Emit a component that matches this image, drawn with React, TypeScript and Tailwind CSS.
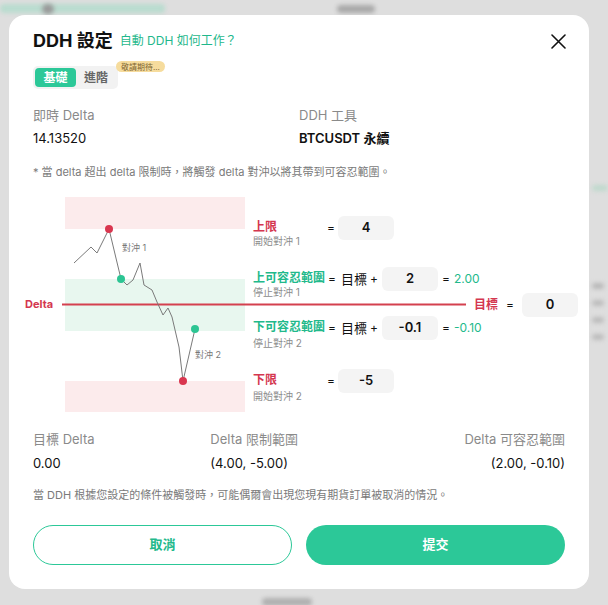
import React from "react";

// price path drawn inside the hedge diagram (x, y relative to the chart box)
const path: [number, number][] = [
  [65, 66], [82, 50], [88, 56], [100, 32], [112, 82], [118, 88], [124, 83],
  [131, 66], [135, 88], [143, 93], [148, 105], [154, 118], [159, 111],
  [163, 120], [170, 150], [174, 184], [186, 132],
];

function ValueBox({ value, className = "" }: { value: string; className?: string }) {
  return (
    <div
      className={`flex h-6 w-14 items-center justify-center rounded-md bg-[#f4f4f4] text-[13px] font-semibold text-[#111] ${className}`}
    >
      {value}
    </div>
  );
}

function HedgeChart() {
  return (
    <svg className="absolute inset-0" width={580} height={215} viewBox="0 0 580 215">
      <rect x={56} y={0} width={180} height={32} fill="#fcebec" />
      <rect x={56} y={82} width={180} height={52} fill="#e8f7ef" />
      <rect x={56} y={184} width={180} height={31} fill="#fcebec" />
      <line x1={53} y1={107.5} x2={457} y2={107.5} stroke="#d4404f" strokeWidth={2} />
      <text x={16} y={111} fontSize={11} fontWeight={700} fill="#d4374f">
        Delta
      </text>
      <polyline
        points={path.map((p) => p.join(",")).join(" ")}
        fill="none"
        stroke="#7a7a7a"
        strokeWidth={1}
      />
      <circle cx={100} cy={32} r={4} fill="#d9364f" />
      <circle cx={112} cy={82} r={4} fill="#2cc593" />
      <circle cx={174} cy={184} r={4} fill="#d9364f" />
      <circle cx={186} cy={132} r={4} fill="#2cc593" />
      <text x={113} y={54} fontSize={9} fill="#777">對沖 1</text>
      <text x={186} y={161} fontSize={9} fill="#777">對沖 2</text>
    </svg>
  );
}

export default function App() {
  return (
    <div className="relative h-[605px] w-[608px] overflow-hidden bg-[#dedede] pl-[9px] pt-[15px] font-['Inter','Noto_Sans_CJK_TC',sans-serif] text-[#111]">
      {/* blurred page behind the overlay */}
      <div className="absolute left-0 top-[4px] h-[9px] w-[165px] rounded bg-[#b9dccf] blur-[2px]" />
      <div className="absolute left-[42px] top-[4px] h-[10px] w-[12px] rounded-full bg-[#9a9a9a] blur-[2px]" />
      <div className="absolute left-[337px] top-[5px] h-[8px] w-[38px] rounded bg-[#a9a9a9] blur-[2px]" />
      <div className="absolute left-[592px] top-[185px] h-[6px] w-[16px] rounded bg-[#bfd9cd] blur-[2px]" />
      <div className="absolute left-[592px] top-[283px] h-[6px] w-[12px] rounded bg-[#b8b8b8] blur-[2px]" />
      <div className="absolute left-[592px] top-[300px] h-[6px] w-[12px] rounded bg-[#bcbcbc] blur-[2px]" />
      <div className="absolute left-[592px] top-[317px] h-[6px] w-[12px] rounded bg-[#bcbcbc] blur-[2px]" />
      <div className="absolute left-[592px] top-[334px] h-[6px] w-[12px] rounded bg-[#bcbcbc] blur-[2px]" />
      <div className="absolute left-[262px] top-[598px] h-[8px] w-[50px] rounded bg-[#b0b0b0] blur-[2px]" />

      <div className="relative w-[580px] rounded-[16px] bg-white px-6 pb-6 pt-[14px]">
        <div className="flex h-6 items-center">
          <h2 className="text-[18px] font-bold leading-6">DDH 設定</h2>
          <span className="ml-[7px] text-[12px] text-[#1fb88c]">自動 DDH 如何工作？</span>
          <button className="-mr-px ml-auto flex h-[15px] w-[15px] items-center justify-center">
            <svg width={15} height={15} viewBox="0 0 15 15">
              <path d="M1 1 L14 14 M14 1 L1 14" stroke="#111" strokeWidth={1.6} strokeLinecap="round" />
            </svg>
          </button>
        </div>

        <div className="relative mt-[13px] inline-flex h-[23px] rounded-[5px] bg-[#f2f2f2] p-[2px]">
          <span className="flex w-[41px] items-center justify-center rounded-[4px] bg-[#2cc898] text-[12px] font-semibold text-white">
            基礎
          </span>
          <span className="flex w-[40px] items-center justify-center text-[12px] font-semibold text-[#666]">
            進階
          </span>
          <span className="absolute left-[83px] top-[-5px] flex h-[11px] items-center whitespace-nowrap rounded-full bg-[#f6dc9d] px-[5px] text-[8px] text-[#7d6430]">
            敬請期待...
          </span>
        </div>

        <div className="mt-4 grid grid-cols-2">
          <div>
            <div className="text-[13px] leading-5 text-[#8a8a8a]">即時 Delta</div>
            <div className="mt-[3px] text-[13px] leading-5">14.13520</div>
          </div>
          <div>
            <div className="text-[13px] leading-5 text-[#8a8a8a]">DDH 工具</div>
            <div className="mt-[3px] text-[13px] font-semibold leading-5">BTCUSDT 永續</div>
          </div>
        </div>

        <p className="mt-4 text-[11px] leading-4 text-[#7a7a7a]">
          * 當 delta 超出 delta 限制時，將觸發 delta 對沖以將其帶到可容忍範圍。
        </p>

        <div className="relative -mx-6 mt-[17px] h-[215px]">
          <HedgeChart />

          <div className="relative flex flex-col pl-[244px]">
            <div className="mt-[19px] flex items-start">
              <div className="w-[72px] pt-[3px]">
                <div className="text-[12px] font-semibold leading-4 text-[#d4374f]">上限</div>
                <div className="text-[10px] leading-3 text-[#8c8c8c]">開始對沖 1</div>
              </div>
              <span className="w-3 text-center text-[12px] leading-6">=</span>
              <ValueBox value="4" className="ml-px" />
            </div>

            <div className="mt-[20px] flex items-start">
              <div className="w-[72px] pt-[3px]">
                <div className="text-[12px] font-semibold leading-4 text-[#22b98b]">上可容忍範圍</div>
                <div className="text-[10px] leading-3 text-[#8c8c8c]">停止對沖 1</div>
              </div>
              <span className="ml-px w-3 text-center text-[12px] leading-6">=</span>
              <span className="ml-[3px] text-[13px] leading-6">目標</span>
              <span className="ml-[3px] text-[12px] leading-6">+</span>
              <ValueBox value="2" className="ml-[4px]" />
              <span className="ml-[4px] text-[12px] leading-6">=</span>
              <span className="ml-[4px] text-[12px] leading-6 text-[#22b98b]">2.00</span>
            </div>

            <div className="mt-[18px] flex items-start">
              <div className="w-[72px] pt-[3px]">
                <div className="text-[12px] font-semibold leading-4 text-[#22b98b]">下可容忍範圍</div>
                <div className="mt-[2px] text-[10px] leading-3 text-[#8c8c8c]">停止對沖 2</div>
              </div>
              <span className="ml-px w-3 text-center text-[12px] leading-6">=</span>
              <span className="ml-[3px] text-[13px] leading-6">目標</span>
              <span className="ml-[3px] text-[12px] leading-6">+</span>
              <ValueBox value="-0.1" className="ml-[4px]" />
              <span className="ml-[4px] text-[12px] leading-6">=</span>
              <span className="ml-[4px] text-[12px] leading-6 text-[#22b98b]">-0.10</span>
            </div>

            <div className="mt-[20px] flex items-start">
              <div className="w-[72px] pt-[3px]">
                <div className="text-[12px] font-semibold leading-4 text-[#d4374f]">下限</div>
                <div className="mt-[2px] text-[10px] leading-3 text-[#8c8c8c]">開始對沖 2</div>
              </div>
              <span className="w-3 text-center text-[12px] leading-6">=</span>
              <ValueBox value="-5" className="ml-px" />
            </div>
          </div>

          {/* target marker sitting on the delta line */}
          <div className="absolute left-[465px] top-[96px] flex items-center">
            <span className="text-[12px] font-semibold leading-6 text-[#d4374f]">目標</span>
            <span className="ml-[8px] text-[12px] leading-6">=</span>
            <ValueBox value="0" className="ml-[8px]" />
          </div>
        </div>

        <div className="mt-[17px] grid grid-cols-3">
          <div>
            <div className="text-[13px] leading-5 text-[#8a8a8a]">目標 Delta</div>
            <div className="mt-1 text-[13px] leading-5">0.00</div>
          </div>
          <div>
            <div className="text-[13px] leading-5 text-[#8a8a8a]">Delta 限制範圍</div>
            <div className="mt-1 text-[13px] leading-5">(4.00, -5.00)</div>
          </div>
          <div className="text-right">
            <div className="text-[13px] leading-5 text-[#8a8a8a]">Delta 可容忍範圍</div>
            <div className="mt-1 text-[13px] leading-5">(2.00, -0.10)</div>
          </div>
        </div>

        <p className="mt-[14px] text-[11px] leading-4 text-[#7a7a7a]">
          當 DDH 根據您設定的條件被觸發時，可能偶爾會出現您現有期貨訂單被取消的情況。
        </p>

        <div className="mt-[22px] grid grid-cols-2 gap-[14px]">
          <button className="h-10 rounded-full border border-[#2cc898] text-[13px] font-semibold text-[#22b98b]">
            取消
          </button>
          <button className="h-10 rounded-full bg-[#2cc898] text-[13px] font-semibold text-white">
            提交
          </button>
        </div>
      </div>
    </div>
  );
}
